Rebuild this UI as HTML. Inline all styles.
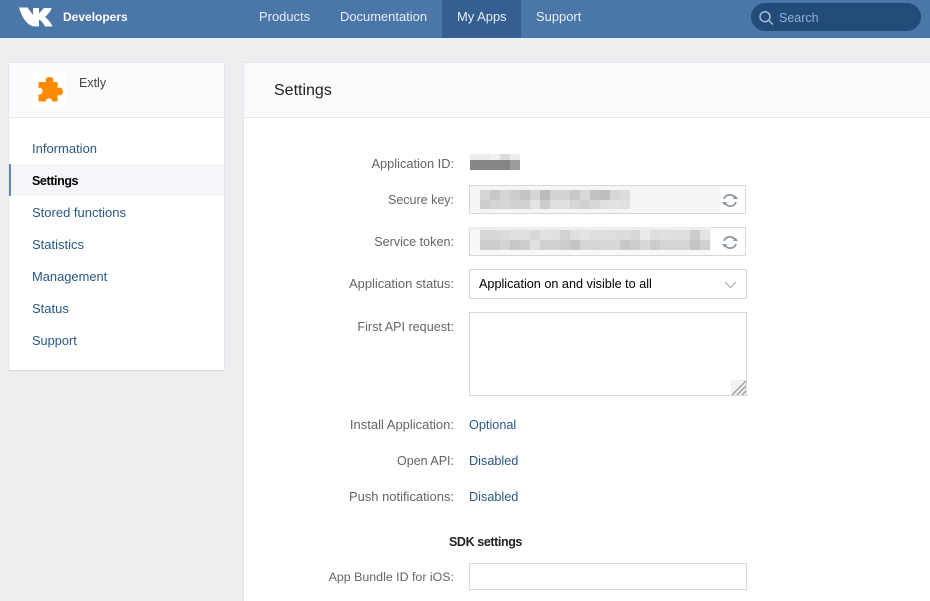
<!DOCTYPE html>
<html><head><meta charset="utf-8"><style>
*{box-sizing:border-box}
html,body{margin:0;padding:0}
body{width:930px;height:601px;overflow:hidden;background:#edeef0;font-family:"Liberation Sans",sans-serif;font-size:12.5px;position:relative}
.a{position:absolute;white-space:nowrap}
.nav{color:#e8eef5;font-size:12.950px;top:9px;line-height:16px}
.side{left:32px;color:#2a5885;line-height:16px;font-size:13px}
.lab{right:476px;color:#656565;line-height:16px;text-align:right;font-size:12.8px}
.lnk{left:469px;color:#2a5885;line-height:16px;font-size:12.7px}
.box{border:1px solid #d3d9de;background:#fff}
</style></head><body>
<div class="a" style="left:0;top:0;width:930px;height:38px;background:#4a76a8"></div>
<div class="a" style="left:442px;top:0;width:79px;height:38px;background:#355f90"></div>
<svg class="a" style="left:19px;top:7px" width="34" height="20" viewBox="0 0 34 20"><path d="M0 0.5H8.500L14 8V1H20V6.500L25 1H32.500C31.500 5 28 8 26 10C29 12 32 16 33.500 19.500H26C24 15.500 22 13.500 20 12.500V19.500H16C9 19.500 3 11 0 0.500Z" fill="#fff"/></svg>
<div class="a" style="left:63px;top:9px;color:#fff;font-weight:bold;font-size:12px;line-height:16px">Developers</div>
<div class="a nav" style="left:259px">Products</div>
<div class="a nav" style="left:340px">Documentation</div>
<div class="a nav" style="left:457px">My Apps</div>
<div class="a nav" style="left:536px">Support</div>
<div class="a" style="left:751px;top:3px;width:170px;height:28px;border-radius:14px;background:#224b7a"></div>
<svg class="a" style="left:758px;top:10px" width="17" height="16" viewBox="0 0 17 16"><circle cx="7" cy="6.700" r="5" fill="none" stroke="#a5bbd3" stroke-width="1.500"/><path d="M10.800 10.500L15 14.500" stroke="#a5bbd3" stroke-width="1.500"/></svg>
<div class="a" style="left:779px;top:10px;color:#8fb0d2;line-height:16px">Search</div>

<div class="a" style="left:9px;top:63px;width:215px;height:307px;background:#fff;box-shadow:0 1px 1px #d7d8db,0 0 0 1px #e7e8ec;"></div>
<div class="a" style="left:9px;top:63px;width:215px;height:55px;background:#fafbfc;border-bottom:1px solid #e7e8ec"></div>
<svg class="a" style="left:32px;top:73px" width="34" height="34" viewBox="0 0 34 34"><rect width="34" height="34" fill="#fff"/><path d="M6.500 9H14C13 6 14 4 17.500 4C21 4 22 6 21 9H25.500V15C28 14 31 15 31 18.500C31 22 28 23 25.500 22V28.500H20C20.500 26.500 19 25.500 17 25.500C15 25.500 13.500 26.500 14 28.500H6.500V21.500C9 22 10.500 20 10.500 18C10.500 16 9 14.500 6.500 15Z" fill="#ff8a00"/></svg>
<div class="a" style="left:79px;top:75px;color:#444;line-height:16px">Extly</div>
<div class="a" style="left:9px;top:164px;width:215px;height:32px;background:#f5f6fa;border-left:2px solid #5b88bd"></div>
<div class="a side" style="top:141px">Information</div>
<div class="a side" style="top:173px;color:#000;font-weight:bold;font-size:12.500px;letter-spacing:-0.400px">Settings</div>
<div class="a side" style="top:205px">Stored functions</div>
<div class="a side" style="top:237px">Statistics</div>
<div class="a side" style="top:269px;font-size:12.900px">Management</div>
<div class="a side" style="top:301px">Status</div>
<div class="a side" style="top:333px;font-size:12.800px">Support</div>

<div class="a" style="left:244px;top:63px;width:686px;height:538px;background:#fff;box-shadow:0 0 0 1px #e7e8ec"></div>
<div class="a" style="left:244px;top:63px;width:686px;height:55px;background:#fafbfc;border-bottom:1px solid #e7e8ec"></div>
<div class="a" style="left:274px;top:82px;font-size:16px;color:#222;line-height:18px">Settings</div>

<div class="a lab" style="top:156px">Application ID:</div>
<div class="a lab" style="top:192px;font-size:12.500px">Secure key:</div>
<div class="a lab" style="top:234px;font-size:12.600px">Service token:</div>
<div class="a lab" style="top:276px;font-size:12.950px">Application status:</div>
<div class="a lab" style="top:319px;font-size:12.600px">First API request:</div>
<div class="a lab" style="top:417px;font-size:13px">Install Application:</div>
<div class="a lab" style="top:453px;font-size:12.500px">Open API:</div>
<div class="a lab" style="top:489px;font-size:12.950px">Push notifications:</div>
<div class="a lab" style="top:569px;font-size:12.400px">App Bundle ID for iOS:</div>

<svg class="a" style="left:470px;top:154px" width="50" height="16" shape-rendering="crispEdges"><rect width="50" height="6" fill="#ececec"/><rect x="20" width="10" height="6" fill="#f0f0f0"/><rect x="30" width="10" height="6" fill="#dcdcdc"/><rect y="6" width="40" height="10" fill="#868686"/><rect x="40" y="6" width="10" height="10" fill="#9c9c9c"/></svg>

<div class="a box" style="left:469px;top:185px;width:277px;height:29px;background:#f5f5f5"></div>
<div class="a" style="left:720px;top:186px;width:25px;height:27px;background:#fff"></div>
<svg class="a" style="left:480px;top:190px" width="150" height="19" shape-rendering="crispEdges">
<g><rect x="0" width="10" height="10" fill="#d4d4d4"/><rect x="10" width="10" height="10" fill="#c8c8c8"/><rect x="20" width="10" height="10" fill="#d4d4d4"/><rect x="30" width="10" height="10" fill="#cccccc"/><rect x="40" width="10" height="10" fill="#c4c4c4"/><rect x="50" width="10" height="10" fill="#d6d6d6"/><rect x="60" width="10" height="10" fill="#bcbcbc"/><rect x="70" width="10" height="10" fill="#d2d2d2"/><rect x="80" width="10" height="10" fill="#d2d2d2"/><rect x="90" width="10" height="10" fill="#c8c8c8"/><rect x="100" width="10" height="10" fill="#d8d8d8"/><rect x="110" width="10" height="10" fill="#c2c2c2"/><rect x="120" width="10" height="10" fill="#bebebe"/><rect x="130" width="10" height="10" fill="#d6d6d6"/><rect x="140" width="10" height="10" fill="#dcdcdc"/></g>
<g><rect x="0" y="10" width="10" height="9" fill="#cccccc"/><rect x="10" y="10" width="10" height="9" fill="#d4d4d4"/><rect x="20" y="10" width="10" height="9" fill="#d6d6d6"/><rect x="30" y="10" width="10" height="9" fill="#d0d0d0"/><rect x="40" y="10" width="10" height="9" fill="#d0d0d0"/><rect x="50" y="10" width="10" height="9" fill="#e4e4e4"/><rect x="60" y="10" width="10" height="9" fill="#cccccc"/><rect x="70" y="10" width="10" height="9" fill="#e0e0e0"/><rect x="80" y="10" width="10" height="9" fill="#e0e0e0"/><rect x="90" y="10" width="10" height="9" fill="#d6d6d6"/><rect x="100" y="10" width="10" height="9" fill="#d0d0d0"/><rect x="110" y="10" width="10" height="9" fill="#d8d8d8"/><rect x="120" y="10" width="10" height="9" fill="#e0e0e0"/><rect x="130" y="10" width="10" height="9" fill="#e2e2e2"/><rect x="140" y="10" width="10" height="9" fill="#e0e0e0"/></g>
</svg>
<svg class="a" style="left:721px;top:192px" width="18" height="17" viewBox="0 0 18 17"><path d="M3 7A6 6 0 0 1 14 6M15 10A6 6 0 0 1 4 11" fill="none" stroke="#8f98a3" stroke-width="1.800"/><path d="M12 7H17L14.500 3.500ZM1 10H6L3.500 13.500Z" fill="#8f98a3"/></svg>

<div class="a box" style="left:469px;top:227px;width:277px;height:29px;background:#f8f8f8"></div>
<div class="a" style="left:711px;top:228px;width:34px;height:27px;background:#fff"></div>
<div class="a" style="left:468px;top:227px;width:243px;height:3px;background:#efefef"></div>
<svg class="a" style="left:480px;top:230px" width="230" height="20" shape-rendering="crispEdges">
<g><rect x="0" width="10" height="10" fill="#d8d8d8"/><rect x="10" width="10" height="10" fill="#d8d8d8"/><rect x="20" width="10" height="10" fill="#dcdcdc"/><rect x="30" width="10" height="10" fill="#e0e0e0"/><rect x="40" width="10" height="10" fill="#e0e0e0"/><rect x="50" width="10" height="10" fill="#d8d8d8"/><rect x="60" width="10" height="10" fill="#e2e2e2"/><rect x="70" width="10" height="10" fill="#e0e0e0"/><rect x="80" width="10" height="10" fill="#d2d2d2"/><rect x="90" width="10" height="10" fill="#dedede"/><rect x="100" width="10" height="10" fill="#e4e4e4"/><rect x="110" width="10" height="10" fill="#dedede"/><rect x="120" width="10" height="10" fill="#dedede"/><rect x="130" width="10" height="10" fill="#dcdcdc"/><rect x="140" width="10" height="10" fill="#dcdcdc"/><rect x="150" width="10" height="10" fill="#d8d8d8"/><rect x="160" width="10" height="10" fill="#eaeaea"/><rect x="170" width="10" height="10" fill="#dedede"/><rect x="180" width="10" height="10" fill="#e0e0e0"/><rect x="190" width="10" height="10" fill="#dedede"/><rect x="200" width="10" height="10" fill="#dedede"/><rect x="210" width="10" height="10" fill="#cccccc"/><rect x="220" width="10" height="10" fill="#e4e4e4"/></g>
<g><rect x="0" y="10" width="10" height="10" fill="#cccccc"/><rect x="10" y="10" width="10" height="10" fill="#cccccc"/><rect x="20" y="10" width="10" height="10" fill="#d4d4d4"/><rect x="30" y="10" width="10" height="10" fill="#c8c8c8"/><rect x="40" y="10" width="10" height="10" fill="#cccccc"/><rect x="50" y="10" width="10" height="10" fill="#e0e0e0"/><rect x="60" y="10" width="10" height="10" fill="#d0d0d0"/><rect x="70" y="10" width="10" height="10" fill="#d0d0d0"/><rect x="80" y="10" width="10" height="10" fill="#cccccc"/><rect x="90" y="10" width="10" height="10" fill="#c4c4c4"/><rect x="100" y="10" width="10" height="10" fill="#d6d6d6"/><rect x="110" y="10" width="10" height="10" fill="#d4d4d4"/><rect x="120" y="10" width="10" height="10" fill="#d8d8d8"/><rect x="130" y="10" width="10" height="10" fill="#d8d8d8"/><rect x="140" y="10" width="10" height="10" fill="#c8c8c8"/><rect x="150" y="10" width="10" height="10" fill="#cccccc"/><rect x="160" y="10" width="10" height="10" fill="#d8d8d8"/><rect x="170" y="10" width="10" height="10" fill="#cccccc"/><rect x="180" y="10" width="10" height="10" fill="#d4d4d4"/><rect x="190" y="10" width="10" height="10" fill="#d4d4d4"/><rect x="200" y="10" width="10" height="10" fill="#d4d4d4"/><rect x="210" y="10" width="10" height="10" fill="#c4c4c4"/><rect x="220" y="10" width="10" height="10" fill="#d0d0d0"/></g>
</svg>
<svg class="a" style="left:721px;top:234px" width="18" height="17" viewBox="0 0 18 17"><path d="M3 7A6 6 0 0 1 14 6M15 10A6 6 0 0 1 4 11" fill="none" stroke="#8f98a3" stroke-width="1.800"/><path d="M12 7H17L14.500 3.500ZM1 10H6L3.500 13.500Z" fill="#8f98a3"/></svg>

<div class="a box" style="left:469px;top:269px;width:278px;height:30px;border-radius:2px"></div>
<div class="a" style="left:479px;top:276px;color:#000;line-height:16px;font-size:12.650px">Application on and visible to all</div>
<svg class="a" style="left:724px;top:281px" width="13" height="8"><path d="M1 1L6.500 6.500L12 1" fill="none" stroke="#a8b0ba" stroke-width="1.200"/></svg>

<div class="a box" style="left:469px;top:312px;width:278px;height:84px"></div>
<svg class="a" style="left:731px;top:380px" width="15" height="15"><rect width="15" height="15" fill="#f0f0f0"/><path d="M1 15L15 1M6 15L15 6M11 15L15 11" stroke="#9a9a9a" stroke-width="1.300"/></svg>

<div class="a lnk" style="top:417px">Optional</div>
<div class="a lnk" style="top:453px">Disabled</div>
<div class="a lnk" style="top:489px">Disabled</div>
<div class="a" style="left:449px;top:534px;color:#222;font-weight:bold;line-height:16px;font-size:12.500px;letter-spacing:-0.400px">SDK settings</div>
<div class="a box" style="left:469px;top:563px;width:278px;height:27px"></div>
</body></html>
